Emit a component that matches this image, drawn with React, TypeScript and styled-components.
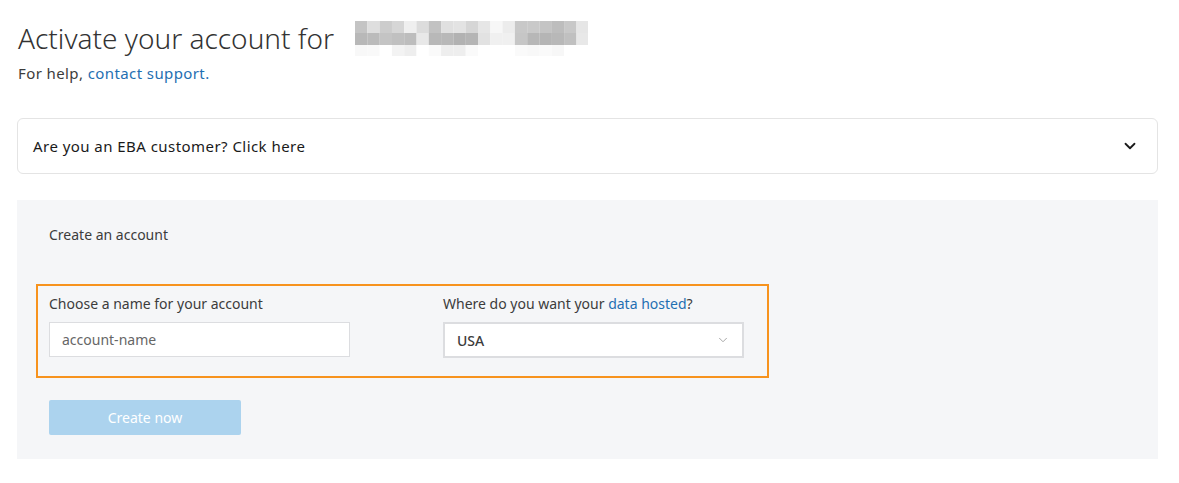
import React from 'react';
import styled, { createGlobalStyle } from 'styled-components';
import { ChevronDown } from 'lucide-react';

const GlobalStyle = createGlobalStyle`
  html, body {
    margin: 0;
    padding: 0;
    background: #ffffff;
    font-family: "Noto Sans", "Open Sans", Arial, sans-serif;
    color: #3c3c3c;
  }
`;

const StyledPage = styled.div`
  display: flex;
  flex-direction: column;
  padding: 16px 21px 24px 17px;
`;

const StyledTitle = styled.h1`
  display: flex;
  align-items: center;
  margin: 0 0 0 1px;
  font-size: 28px;
  font-weight: 300;
  line-height: 44px;
  color: #333333;
  gap: 21px;
`;

const StyledHelp = styled.p`
  margin: 2px 0 0 1px;
  font-size: 15px;
  line-height: 22px;
  letter-spacing: 0.4px;
  color: #3c3c3c;
`;

const StyledLink = styled.a`
  color: #1f6fb2;
  text-decoration: none;
`;

const StyledAccordion = styled.div`
  display: flex;
  align-items: center;
  justify-content: space-between;
  height: 54px;
  margin-top: 34px;
  padding: 0 18px 0 15px;
  border: 1px solid #e4e4e4;
  border-radius: 6px;
  font-size: 15px;
  letter-spacing: 0.45px;
  color: #1a1a1a;
`;

const StyledPanel = styled.section`
  display: flex;
  flex-direction: column;
  align-items: flex-start;
  margin-top: 26px;
  padding: 25px 32px 24px 32px;
  background: #f5f6f8;
`;

const StyledSectionTitle = styled.div`
  font-size: 14px;
  line-height: 20px;
  color: #3c3c3c;
`;

const StyledHighlight = styled.div`
  display: grid;
  grid-template-columns: 301px 301px;
  column-gap: 93px;
  margin: 39px 0 0 -13px;
  padding: 8px 23px 18px 11px;
  border: 2px solid #f7931e;
`;

const StyledField = styled.div`
  display: flex;
  flex-direction: column;
  gap: 8px;
`;

const StyledLabel = styled.label`
  font-size: 14px;
  line-height: 20px;
  color: #3c3c3c;
`;

const StyledInput = styled.input`
  box-sizing: border-box;
  width: 100%;
  height: 35px;
  padding: 0 12px;
  border: 1px solid #dcdde0;
  background: #ffffff;
  font-family: inherit;
  font-size: 14px;
  color: #3c3c3c;
  outline: none;

  &::placeholder {
    color: #666666;
  }
`;

const StyledSelect = styled.div`
  box-sizing: border-box;
  display: flex;
  align-items: center;
  justify-content: space-between;
  width: 100%;
  height: 36px;
  padding: 0 12px 0 12px;
  border: 2px solid #dcdde0;
  background: #ffffff;
  font-size: 14px;
  font-weight: 500;
  color: #3c3c3c;
`;

const StyledButton = styled.button`
  width: 192px;
  height: 35px;
  margin-top: 22px;
  border: none;
  border-radius: 2px;
  background: #acd3ee;
  color: #ffffff;
  font-family: inherit;
  font-size: 14px;
  cursor: not-allowed;
`;

const mosaic = [
  ['#c4','#de','#cc','#d6','#ef','#dc','#c2','#e0','#e3','#d6','#e6','#f7','#ec','#c8','#c9','#c4','#bd','#c8','#e6'],
  ['#b8','#bb','#c4','#c0','#bd','#e8','#b8','#b8','#b2','#b5','#e2','#f0','#f0','#c6','#b7','#b5','#b8','#c0','#e8'],
  ['#f8','#f9','#ff','#f3','#ee','#ff','#fa','#ee','#ee','#fa','#ff','#ff','#ff','#fa','#f8','#fa','#f7','#ff','#ff'],
];

const Redacted = () => (
  <svg width={233} height={35} viewBox="0 0 233 35" aria-hidden>
    {mosaic.map((row, r) =>
      row.map((c, i) => {
        const v = c.slice(1);
        return (
          <rect
            key={`${r}-${i}`}
            x={i * 12.3}
            y={r * 12}
            width={12.4}
            height={r === 2 ? 11 : 12}
            fill={`#${v}${v}${v}`}
          />
        );
      })
    )}
  </svg>
);

const App = () => (
  <>
    <GlobalStyle />
    <StyledPage>
      <StyledTitle>
        Activate your account for
        <Redacted />
      </StyledTitle>
      <StyledHelp>
        For help, <StyledLink href="#">contact support.</StyledLink>
      </StyledHelp>
      <StyledAccordion>
        <span>Are you an EBA customer? Click here</span>
        <ChevronDown size={18} strokeWidth={2.4} color="#1a1a1a" />
      </StyledAccordion>
      <StyledPanel>
        <StyledSectionTitle>Create an account</StyledSectionTitle>
        <StyledHighlight>
          <StyledField>
            <StyledLabel>Choose a name for your account</StyledLabel>
            <StyledInput placeholder="account-name" />
          </StyledField>
          <StyledField>
            <StyledLabel>
              Where do you want your <StyledLink href="#">data hosted</StyledLink>?
            </StyledLabel>
            <StyledSelect>
              <span>USA</span>
              <ChevronDown size={14} strokeWidth={1.5} color="#9a9a9a" />
            </StyledSelect>
          </StyledField>
        </StyledHighlight>
        <StyledButton disabled>Create now</StyledButton>
      </StyledPanel>
    </StyledPage>
  </>
);

export default App;
